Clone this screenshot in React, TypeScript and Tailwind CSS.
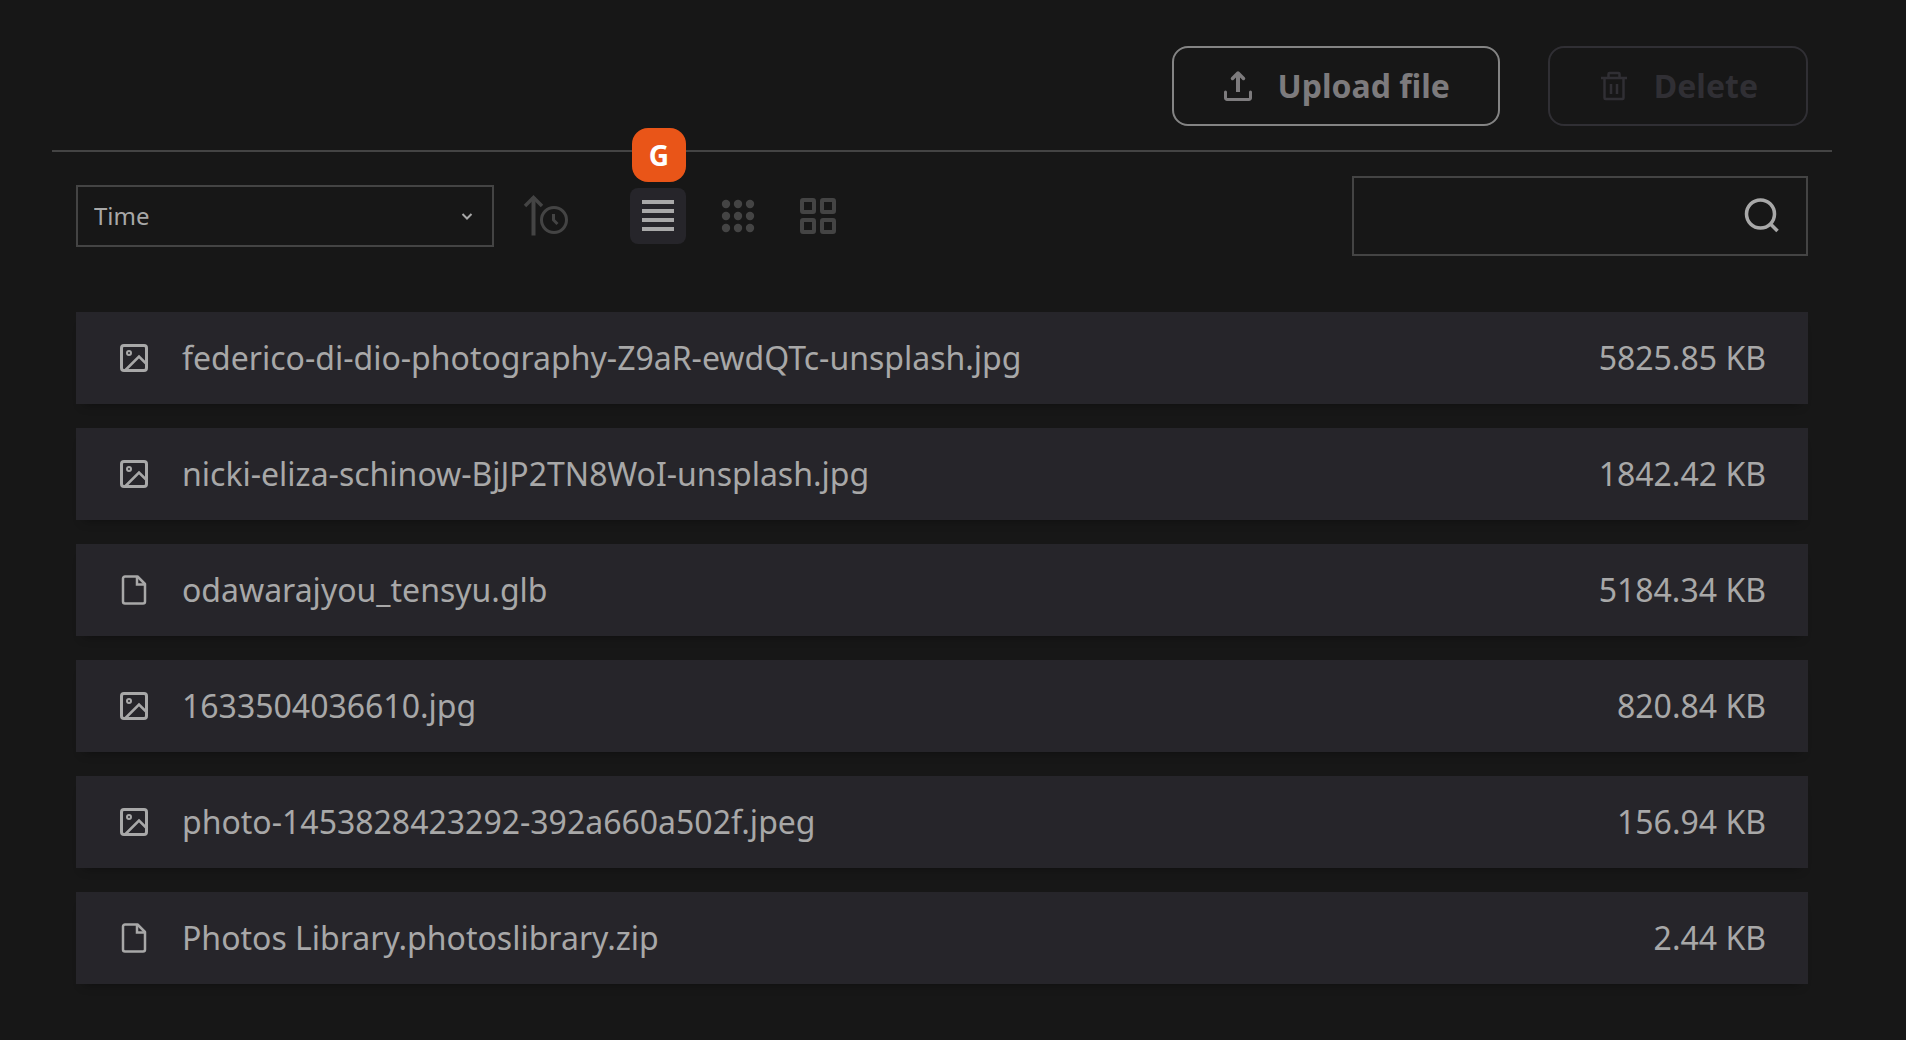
import { useState } from "react";
import type { ReactNode } from "react";

type FileKind = "image" | "file";
type Asset = { name: string; size: string; kind: FileKind };
type View = "list" | "small" | "medium";

const assets: Asset[] = [
  { name: "federico-di-dio-photography-Z9aR-ewdQTc-unsplash.jpg", size: "5825.85 KB", kind: "image" },
  { name: "nicki-eliza-schinow-BjJP2TN8WoI-unsplash.jpg", size: "1842.42 KB", kind: "image" },
  { name: "odawarajyou_tensyu.glb", size: "5184.34 KB", kind: "file" },
  { name: "1633504036610.jpg", size: "820.84 KB", kind: "image" },
  { name: "photo-1453828423292-392a660a502f.jpeg", size: "156.94 KB", kind: "image" },
  { name: "Photos Library.photoslibrary.zip", size: "2.44 KB", kind: "file" },
];

function UploadIcon() {
  return (
    <svg className="size-8 shrink-0" viewBox="0 0 32 32" fill="none" stroke="currentColor" strokeWidth="3" aria-hidden="true">
      <path d="M16 3v19" strokeWidth="4" />
      <path d="M10.500 8.500L16 3l5.500 5.500" strokeWidth="3.500" strokeLinecap="round" strokeLinejoin="round" />
      <path d="M3.500 22v6a1.500 1.500 0 0 0 1.500 1.500h22a1.500 1.500 0 0 0 1.500-1.500v-6" strokeLinecap="round" />
    </svg>
  );
}

function TrashIcon() {
  return (
    <svg className="size-8 shrink-0" viewBox="0 0 32 32" fill="none" stroke="currentColor" strokeWidth="2.500" aria-hidden="true">
      <path d="M3 8h26" />
      <path d="M6.500 8v20a1 1 0 0 0 1 1h17a1 1 0 0 0 1-1V8" />
      <path d="M10.500 8V4a1 1 0 0 1 1-1h9a1 1 0 0 1 1 1v4" />
      <path d="M13 14v10M19 14v10" />
    </svg>
  );
}

function SortIcon() {
  return (
    <svg className="size-12" viewBox="0 0 48 48" fill="none" stroke="currentColor" strokeWidth="4" aria-hidden="true">
      <path d="M11.500 5v38.500" />
      <path d="M3 14l8.500-8.500L20 14" strokeWidth="3.500" />
      <circle cx="32" cy="28" r="12.500" strokeWidth="3" />
      <path d="M31.500 22v6l4 4" strokeWidth="3" />
    </svg>
  );
}

function ListIcon() {
  return (
    <svg className="size-10" viewBox="0 0 40 40" fill="none" stroke="currentColor" strokeWidth="4" aria-hidden="true">
      <path d="M4 6h32M4 15h32M4 24h32M4 33h32" />
    </svg>
  );
}

function DotsIcon() {
  return (
    <svg className="size-10" viewBox="0 0 40 40" fill="currentColor" aria-hidden="true">
      {[8, 20, 32].map((cy) => [8, 20, 32].map((cx) => <circle key={`${cx}-${cy}`} cx={cx} cy={cy} r="4.200" />))}
    </svg>
  );
}

function GridIcon() {
  return (
    <svg className="size-10" viewBox="0 0 40 40" fill="none" stroke="currentColor" strokeWidth="4" aria-hidden="true">
      {[4, 24].map((y) => [4, 24].map((x) => <rect key={`${x}-${y}`} x={x} y={y} width="12" height="12" rx="1" />))}
    </svg>
  );
}

function ImageIcon() {
  return (
    <svg className="size-8 shrink-0" viewBox="0 0 32 32" fill="none" stroke="currentColor" strokeWidth="2.500" aria-hidden="true">
      <rect x="3.500" y="3.500" width="25" height="25" rx="2.500" strokeWidth="3" />
      <circle cx="11" cy="11" r="2" strokeWidth="2" />
      <path d="M7.500 28L21 14.500l7 7" />
    </svg>
  );
}

function FileIcon() {
  return (
    <svg className="size-8 shrink-0" viewBox="0 0 32 32" fill="none" stroke="currentColor" strokeWidth="2.500" aria-hidden="true">
      <path d="M19.500 2.500H7a2 2 0 0 0-2 2v23a2 2 0 0 0 2 2h18a2 2 0 0 0 2-2V10z" strokeLinejoin="round" />
      <path d="M19 2.500v8h8" />
    </svg>
  );
}

function ViewButton({
  label,
  active,
  onClick,
  children,
}: {
  label: string;
  active: boolean;
  onClick: () => void;
  children: ReactNode;
}) {
  return (
    <button
      type="button"
      aria-label={label}
      aria-pressed={active}
      onClick={onClick}
      className={`flex size-14 items-center justify-center rounded-lg ${active ? "bg-[#26252a] text-[#a8a8a8]" : "text-[#444444]"}`}
    >
      {children}
    </button>
  );
}

export default function App() {
  const [view, setView] = useState<View>("list");

  return (
    <main className="min-h-screen bg-[#171717] pt-[46px] pr-[74px] pb-14 pl-[52px] font-['Noto_Sans',sans-serif] text-[#a8a8a8]">
      <header className="flex justify-end gap-12 border-b-2 border-[#444444] px-6 pb-6">
        <button
          type="button"
          className="flex h-20 items-center gap-6 rounded-2xl border-2 border-[#848484] px-12 text-[32px] leading-10 font-bold whitespace-nowrap text-[#7d7b7d]"
        >
          <UploadIcon />
          Upload file
        </button>
        <button
          type="button"
          disabled
          className="flex h-20 items-center gap-6 rounded-2xl border-2 border-[#302f34] px-12 text-[32px] leading-10 font-bold whitespace-nowrap text-[#302f34]"
        >
          <TrashIcon />
          Delete
        </button>
      </header>

      <div className="flex items-center px-6 pt-6">
        <div className="relative w-[418px]">
          <select
            aria-label="Sort by"
            className="block h-[62px] w-full appearance-none border-2 border-[#444444] bg-[#171717] px-4 text-2xl outline-none"
          >
            <option>Time</option>
            <option>Size</option>
            <option>Name</option>
          </select>
          <svg
            className="pointer-events-none absolute inset-y-0 right-5 my-auto size-3.5"
            viewBox="0 0 14 14"
            fill="none"
            stroke="currentColor"
            strokeWidth="2"
            aria-hidden="true"
          >
            <path d="M2.500 5l4.500 4.500L11.500 5" />
          </svg>
        </div>

        <button type="button" aria-label="Reverse order" className="ml-6 flex size-14 items-center justify-center text-[#444444]">
          <SortIcon />
        </button>

        <div className="ml-14 flex gap-6">
          <div className="relative">
            <ViewButton label="List view" active={view === "list"} onClick={() => setView("list")}>
              <ListIcon />
            </ViewButton>
            <span className="absolute right-0 bottom-full mb-1.5 flex size-[54px] items-center justify-center rounded-2xl bg-[#e95518] text-[28px] leading-none font-bold text-white">
              G
            </span>
          </div>
          <ViewButton label="Small tiles" active={view === "small"} onClick={() => setView("small")}>
            <DotsIcon />
          </ViewButton>
          <ViewButton label="Large tiles" active={view === "medium"} onClick={() => setView("medium")}>
            <GridIcon />
          </ViewButton>
        </div>

        <form role="search" className="ml-auto flex h-20 w-[456px] items-center border-2 border-[#444444] pr-6 pl-4" onSubmit={(e) => e.preventDefault()}>
          <input type="text" aria-label="Search files" className="min-w-0 flex-1 bg-transparent text-[28px] outline-none" />
          <button type="submit" aria-label="Search" className="shrink-0">
            <svg className="size-10" viewBox="0 0 40 40" fill="none" stroke="currentColor" strokeWidth="3.500" aria-hidden="true">
              <circle cx="18.500" cy="18" r="14" />
              <path d="M28 27.500l7.500 7.500" />
            </svg>
          </button>
        </form>
      </div>

      <ul className="mt-14 flex flex-col gap-6 px-6">
        {assets.map((asset) => (
          <li
            key={asset.name}
            className="flex min-h-[92px] items-center gap-8 bg-[#26252a] px-[42px] text-[32px] leading-11 shadow-[0_8px_10px_-8px_rgba(0,0,0,0.4)]"
          >
            {asset.kind === "image" ? <ImageIcon /> : <FileIcon />}
            <span className="min-w-0 break-words">{asset.name}</span>
            <span className="ml-auto whitespace-nowrap">{asset.size}</span>
          </li>
        ))}
      </ul>
    </main>
  );
}
